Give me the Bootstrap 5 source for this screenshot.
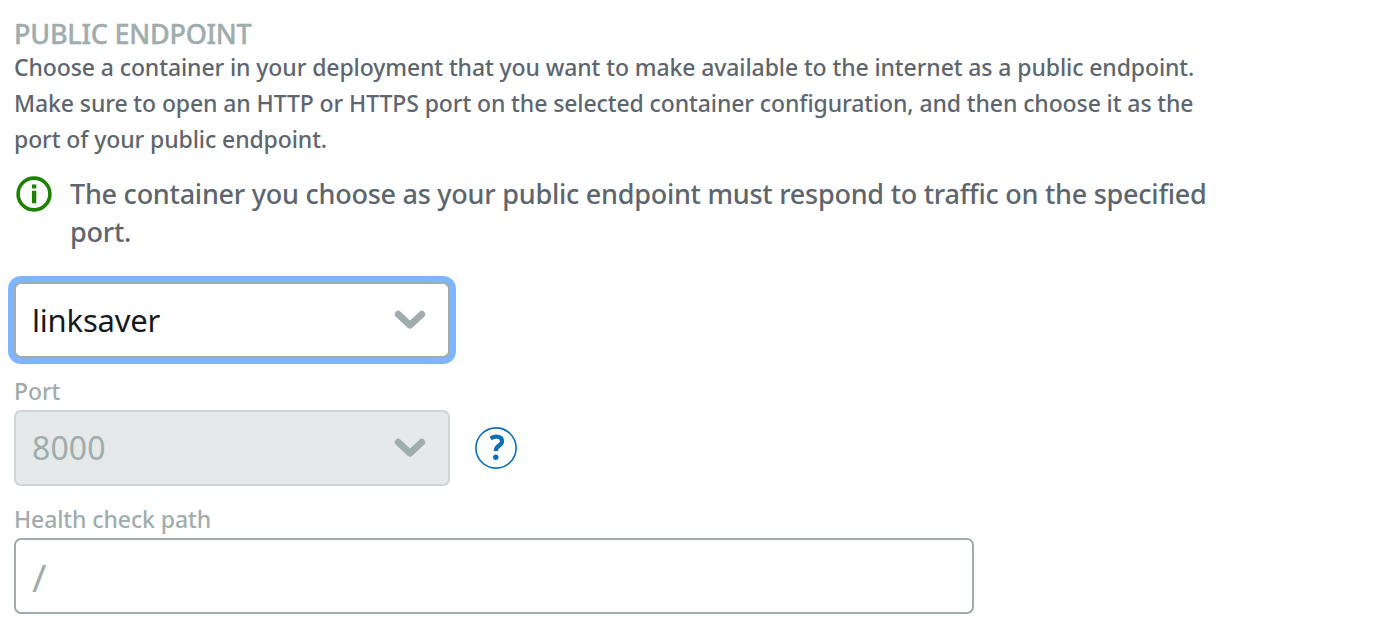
<!DOCTYPE html>
<html lang="en">
<head>
<meta charset="utf-8">
<meta name="viewport" content="width=device-width, initial-scale=1">
<title>Public endpoint</title>
<link href="https://cdn.jsdelivr.net/npm/bootstrap@5.3.0/dist/css/bootstrap.min.css" rel="stylesheet">
<style>
body{font-family:"Noto Sans","Open Sans",sans-serif;color:#5d666f;background:#fff;overflow:hidden}
.endpoint{padding:18px 0 0 14px}
.endpoint-title{font-size:27px;line-height:32px;color:#9fadad;font-weight:500;letter-spacing:-.25px;-webkit-text-stroke:.4px #9fadad}
.endpoint-text{font-size:23px;line-height:36px;font-weight:500;letter-spacing:-.1px;margin-top:-1px}
.notice{margin-top:18px;gap:18px;padding-left:2px}
.notice svg{margin-top:1px}
.notice-text{font-size:27px;line-height:38px;font-weight:500;letter-spacing:-.25px}
.picker{width:436px;height:76px;border:2px solid #9fadad;border-radius:7px;padding:0 22px 0 16px;background:#fff;font-size:31px;line-height:44px;color:#16191f;text-align:left;letter-spacing:-.2px}
.picker.focused{box-shadow:0 0 0 6px #7fb5ff;margin-top:31px}
.picker:disabled{background:#e5e9e9;border-color:#cdd5d4;color:#9fadad;font-size:32px;letter-spacing:.1px}
.field-label{font-size:23px;line-height:36px;font-weight:500;color:#9fadad;margin-top:15px;padding-bottom:1px;letter-spacing:-.1px}
.help-icon{margin-left:25px}
.path-box{width:960px;height:76px;border:2px solid #9fadad;border-radius:7px;padding:0 16px;font-size:39px;line-height:50px;color:#9fadad}
</style>
</head>
<body>
<main class="endpoint">
  <h1 class="endpoint-title mb-0">PUBLIC ENDPOINT</h1>
  <p class="endpoint-text mb-0 text-nowrap">Choose a container in your deployment that you want to make available to the internet as a public endpoint.<br>Make sure to open an HTTP or HTTPS port on the selected container configuration, and then choose it as the<br>port of your public endpoint.</p>
  <div class="notice d-flex align-items-start">
    <svg width="36" height="36" viewBox="0 0 36 36" fill="none" aria-hidden="true"><circle cx="18" cy="18" r="15.9" stroke="#1d8102" stroke-width="3.6"/><path d="M15.9 8.6h4.4v4h-4.4zM15.9 14.8h4.4v12.4h-4.4z" fill="#1d8102"/></svg>
    <p class="notice-text mb-0 text-nowrap">The container you choose as your public endpoint must respond to traffic on the specified<br>port.</p>
  </div>
  <button type="button" class="picker focused d-flex align-items-center justify-content-between">
    <span>linksaver</span>
    <svg width="32" height="20" viewBox="0 0 32 20" fill="none"><path d="M4.2 4.2 16 15.2 27.8 4.2" stroke="#9fadad" stroke-width="6.8" stroke-linecap="round" stroke-linejoin="round"/></svg>
  </button>
  <label class="field-label d-block">Port</label>
  <div class="d-flex align-items-center">
    <button type="button" class="picker d-flex align-items-center justify-content-between" disabled>
      <span>8000</span>
      <svg width="32" height="20" viewBox="0 0 32 20" fill="none"><path d="M4.2 4.2 16 15.2 27.8 4.2" stroke="#9fadad" stroke-width="6.8" stroke-linecap="round" stroke-linejoin="round"/></svg>
    </button>
    <svg class="help-icon" width="42" height="42" viewBox="0 0 42 42" fill="none" aria-label="Help"><circle cx="21" cy="21" r="20.1" stroke="#0a6ebd" stroke-width="1.6"/><path d="M15.6 11.4C20 8.6 27 8.8 27 14.2c0 4.8-6.2 4-6.2 9.8" stroke="#0a6ebd" stroke-width="4.2"/><circle cx="20.8" cy="30.2" r="2.7" fill="#0a6ebd"/></svg>
  </div>
  <label class="field-label d-block" for="path">Health check path</label>
  <input id="path" class="path-box d-block" type="text" value="/">
</main>
<script src="https://cdn.jsdelivr.net/npm/bootstrap@5.3.0/dist/js/bootstrap.bundle.min.js"></script>
</body>
</html>
